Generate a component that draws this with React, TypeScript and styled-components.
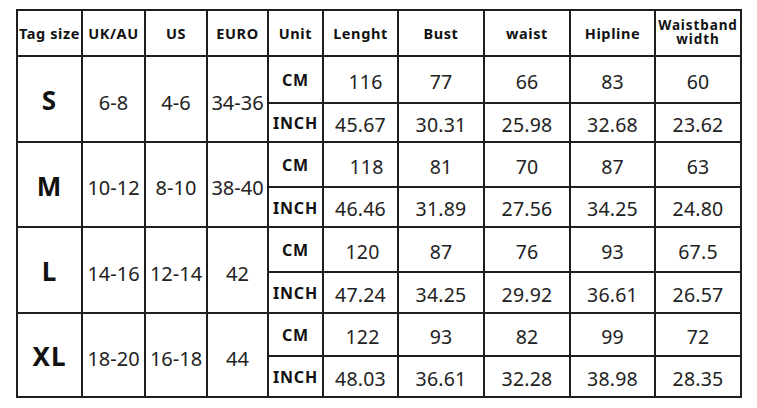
import React from "react";
import styled, { createGlobalStyle } from "styled-components";

const Global = createGlobalStyle`
  html, body { margin: 0; padding: 0; background: #ffffff; }
  body { font-family: "Noto Sans", "Open Sans", sans-serif; color: #222; }
`;

const COLS = [65, 63, 62, 61, 55, 75, 86, 86, 85, 86];
const ROWS = [46, 47, 39, 45, 40, 45, 41, 43, 41];

const Page = styled.div`
  padding: 9px 0 0 16px;
`;

const Grid = styled.div`
  display: grid;
  grid-template-columns: ${COLS.map((c) => c + "px").join(" ")};
  grid-template-rows: ${ROWS.map((r) => r + "px").join(" ")};
  width: max-content;
  border-left: 2px solid #1e1e1e;
  border-top: 2px solid #1e1e1e;
`;

const Cell = styled.div<{ $span?: number }>`
  box-sizing: border-box;
  border-right: 2px solid #1e1e1e;
  border-bottom: 2px solid #1e1e1e;
  display: flex;
  align-items: center;
  justify-content: center;
  text-align: center;
  grid-row: span ${(p) => p.$span ?? 1};
  white-space: nowrap;
`;

const Head = styled(Cell)`
  font-weight: 700;
  font-size: 14.5px;
  letter-spacing: 0.6px;
  color: #111;
`;

const HeadStack = styled(Head)`
  flex-direction: column;
  font-size: 13.5px;
  letter-spacing: 0.9px;
  padding-bottom: 2px;
`;

const HeadLine = styled.span`
  display: block;
  line-height: 14px;
  height: 14px;
`;

const Size = styled(Cell)`
  font-weight: 700;
  font-size: 26px;
  letter-spacing: 1px;
  color: #111;
  padding-top: 2px;
`;

const Range = styled(Cell)`
  font-size: 20px;
  color: #222;
  padding-top: 6px;
`;

const Unit = styled(Cell)`
  font-weight: 700;
  font-size: 16px;
  letter-spacing: 0.8px;
  color: #111;
  padding-top: 1px;
`;

const Value = styled(Cell)<{ $shift?: number }>`
  font-size: 19.5px;
  color: #222;
  letter-spacing: 0.2px;
  padding-top: 3px;
  padding-left: ${(p) => p.$shift ?? 0}px;
`;

const headers = ["Tag size", "UK/AU", "US", "EURO", "Unit", "Lenght", "Bust", "waist", "Hipline"];

const data = [
  { size: "S", uk: "6-8", us: "4-6", eu: "34-36", shift: 10, cm: ["116", "77", "66", "83", "60"], inch: ["45.67", "30.31", "25.98", "32.68", "23.62"] },
  { size: "M", uk: "10-12", us: "8-10", eu: "38-40", shift: 12, cm: ["118", "81", "70", "87", "63"], inch: ["46.46", "31.89", "27.56", "34.25", "24.80"] },
  { size: "L", uk: "14-16", us: "12-14", eu: "42", shift: 4, cm: ["120", "87", "76", "93", "67.5"], inch: ["47.24", "34.25", "29.92", "36.61", "26.57"] },
  { size: "XL", uk: "18-20", us: "16-18", eu: "44", shift: 4, cm: ["122", "93", "82", "99", "72"], inch: ["48.03", "36.61", "32.28", "38.98", "28.35"] },
];

export default function App() {
  return (
    <>
      <Global />
      <Page>
        <Grid>
          {headers.map((h) => (
            <Head key={h}>{h}</Head>
          ))}
          <HeadStack>
            <HeadLine>Waistband</HeadLine>
            <HeadLine>width</HeadLine>
          </HeadStack>
          {data.map((d) => (
            <React.Fragment key={d.size}>
              <Size $span={2}>{d.size}</Size>
              <Range $span={2}>{d.uk}</Range>
              <Range $span={2}>{d.us}</Range>
              <Range $span={2}>{d.eu}</Range>
              <Unit>CM</Unit>
              {d.cm.map((v, i) => (
                <Value key={"c" + i} $shift={i === 0 ? d.shift : 0}>
                  {v}
                </Value>
              ))}
              <Unit>INCH</Unit>
              {d.inch.map((v, i) => (
                <Value key={"i" + i}>{v}</Value>
              ))}
            </React.Fragment>
          ))}
        </Grid>
      </Page>
    </>
  );
}
